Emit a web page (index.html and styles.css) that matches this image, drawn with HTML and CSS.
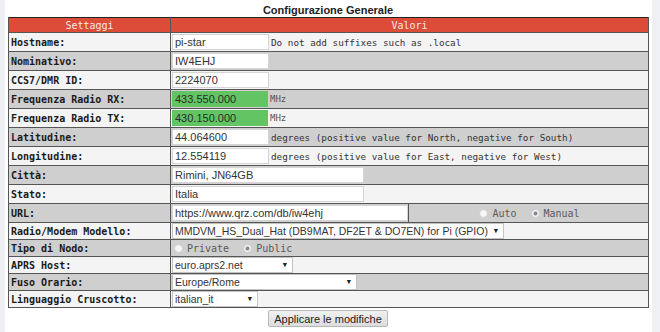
FILE: index.html
```html
<!DOCTYPE html>
<html lang="it">
<head>
<meta charset="UTF-8">
<title>Configurazione Generale</title>
<link rel="stylesheet" href="styles.css">
</head>
<body>
<div class="panel">
    <h2 class="title">Configurazione Generale</h2>
    <table class="settings">
        <colgroup>
            <col class="c-label">
            <col class="c-value">
            <col class="c-extra">
        </colgroup>
        <tr class="head">
            <th>Settaggi</th>
            <th colspan="2">Valori</th>
        </tr>
        <tr class="light">
            <td class="lbl">Hostname:</td>
            <td colspan="2"><input class="field" type="text" value="pi-star"><span class="note">Do not add suffixes such as .local</span></td>
        </tr>
        <tr class="dark">
            <td class="lbl">Nominativo:</td>
            <td colspan="2"><input class="field" type="text" value="IW4EHJ"></td>
        </tr>
        <tr class="light">
            <td class="lbl">CCS7/DMR ID:</td>
            <td colspan="2"><input class="field" type="text" value="2224070"></td>
        </tr>
        <tr class="dark">
            <td class="lbl">Frequenza Radio RX:</td>
            <td colspan="2"><input class="field freq" type="text" value="433.550.000"><span class="unit">MHz</span></td>
        </tr>
        <tr class="light">
            <td class="lbl">Frequenza Radio TX:</td>
            <td colspan="2"><input class="field freq" type="text" value="430.150.000"><span class="unit">MHz</span></td>
        </tr>
        <tr class="dark">
            <td class="lbl">Latitudine:</td>
            <td colspan="2"><input class="field" type="text" value="44.064600"><span class="note">degrees (positive value for North, negative for South)</span></td>
        </tr>
        <tr class="light">
            <td class="lbl">Longitudine:</td>
            <td colspan="2"><input class="field" type="text" value="12.554119"><span class="note">degrees (positive value for East, negative for West)</span></td>
        </tr>
        <tr class="dark">
            <td class="lbl">Città:</td>
            <td colspan="2"><input class="field wide" type="text" value="Rimini, JN64GB"></td>
        </tr>
        <tr class="light">
            <td class="lbl">Stato:</td>
            <td colspan="2"><input class="field wide" type="text" value="Italia"></td>
        </tr>
        <tr class="dark">
            <td class="lbl">URL:</td>
            <td><input class="field url" type="text" value="https://www.qrz.com/db/iw4ehj"></td>
            <td class="center">
                <label class="opt"><input class="radio" type="radio" name="urlmode">Auto</label>
                <label class="opt"><input class="radio" type="radio" name="urlmode" checked>Manual</label>
            </td>
        </tr>
        <tr class="light short">
            <td class="lbl">Radio/Modem Modello:</td>
            <td colspan="2">
                <span class="pick"><select class="sel sel-modem"><option>MMDVM_HS_Dual_Hat (DB9MAT, DF2ET &amp; DO7EN) for Pi (GPIO)</option></select></span>
            </td>
        </tr>
        <tr class="dark short">
            <td class="lbl">Tipo di Nodo:</td>
            <td colspan="2">
                <label class="opt"><input class="radio" type="radio" name="nodo">Private</label>
                <label class="opt"><input class="radio" type="radio" name="nodo" checked>Public</label>
            </td>
        </tr>
        <tr class="light short">
            <td class="lbl">APRS Host:</td>
            <td colspan="2">
                <span class="pick"><select class="sel sel-aprs"><option>euro.aprs2.net</option></select></span>
            </td>
        </tr>
        <tr class="dark short">
            <td class="lbl">Fuso Orario:</td>
            <td colspan="2">
                <span class="pick"><select class="sel sel-tz"><option>Europe/Rome</option></select></span>
            </td>
        </tr>
        <tr class="light short">
            <td class="lbl">Linguaggio Cruscotto:</td>
            <td colspan="2">
                <span class="pick"><select class="sel sel-lang"><option>italian_it</option></select></span>
            </td>
        </tr>
    </table>
    <div class="actions">
        <button class="apply" type="button">Applicare le modifiche</button>
    </div>
</div>
</body>
</html>
```

FILE: styles.css
```css
/* layout di base */
* {
    margin: 0;
    padding: 0;
    box-sizing: border-box;
}

body {
    background: #eef0f3;
    font-family: "DejaVu Sans Mono", "Liberation Mono", monospace;
    color: #222;
}

.panel {
    width: 647px;
    height: 332px;
    margin-left: 5px;
    padding: 3px 0 0 3px;
    background: #fff;
}

.title {
    font-family: "Liberation Sans", Arial, sans-serif;
    font-size: 11px;
    line-height: 14px;
    font-weight: bold;
    text-align: center;
    color: #222;
    width: 640px;
}

/* tabella impostazioni */
.settings {
    width: 640px;
    border-collapse: collapse;
    border: 1px solid #222;
    table-layout: fixed;
}

.c-label { width: 162px; }
.c-value { width: 238px; }
.c-extra { width: 240px; }

.settings th {
    background: #dd4b39;
    color: #f8e8e4;
    font-weight: normal;
    font-size: 10px;
    height: 15px;
    padding: 0;
    border: 1px solid #555;
    border-top: none;
}

.settings td {
    height: 19px;
    padding: 0 1px;
    border: 1px solid #555;
    font-size: 10px;
    white-space: nowrap;
    vertical-align: middle;
}

.settings tr.short td {
    height: 17px;
}

.light td { background: #f4f4f4; }
.dark td { background: #cfcfcf; }

.settings td.lbl {
    font-weight: bold;
    padding-left: 2px;
    font-size: 10px;
    color: #1a1a1a;
}

.center { text-align: center; }

/* campi */
.field {
    width: 97px;
    height: 16px;
    padding: 0 2px;
    border: 1px solid #d4d4d4;
    background: #fff;
    font-family: "Liberation Sans", Arial, sans-serif;
    font-size: 11px;
    color: #333;
    vertical-align: middle;
}

.field.freq {
    width: 96px;
    background: #62c462;
    border-color: #62c462;
    color: #2c2c2c;
}

.field.wide { width: 192px; }
.field.url { width: 236px; }

.note {
    margin-left: 2px;
    font-size: 9.3px;
    color: #333;
    vertical-align: middle;
}

.unit {
    margin-left: 2px;
    font-size: 9px;
    color: #555;
    vertical-align: middle;
}

/* radio */
.opt {
    font-size: 10px;
    color: #5a5a5a;
    margin-right: 6px;
    vertical-align: middle;
}

.opt:last-child { margin-right: 0; }

.radio {
    appearance: none;
    -webkit-appearance: none;
    width: 9px;
    height: 9px;
    margin: 0 4px 0 2px;
    border: 1px solid #cdcdcd;
    border-radius: 50%;
    background: #f6f6f6;
    vertical-align: -1px;
}

.radio:checked {
    background: radial-gradient(circle, #8a8a8a 0 1.6px, #f6f6f6 2.4px);
}

/* select */
.pick {
    position: relative;
    display: inline-block;
    vertical-align: middle;
}

.pick::after {
    content: "\25BC";
    position: absolute;
    right: 6px;
    top: 4px;
    font-size: 7px;
    color: #222;
    pointer-events: none;
}

.sel {
    appearance: none;
    -webkit-appearance: none;
    display: block;
    height: 16px;
    padding: 0 14px 0 2px;
    border: 1px solid #c4c4c4;
    border-radius: 0;
    background: #fff;
    font-family: "Liberation Sans", Arial, sans-serif;
    font-size: 10.5px;
    color: #333;
}

.sel-modem { width: 332px; }
.sel-aprs { width: 121px; }
.sel-tz { width: 185px; }
.sel-lang { width: 86px; }

/* pulsante */
.actions {
    width: 640px;
    display: flex;
    justify-content: center;
    padding-top: 2px;
}

.apply {
    height: 17px;
    padding: 0 5px;
    border: 1px solid #b8b8b8;
    border-radius: 2px;
    background: linear-gradient(#f2f2f2, #dcdcdc);
    font-family: "Liberation Sans", Arial, sans-serif;
    font-size: 11px;
    color: #222;
}
```
